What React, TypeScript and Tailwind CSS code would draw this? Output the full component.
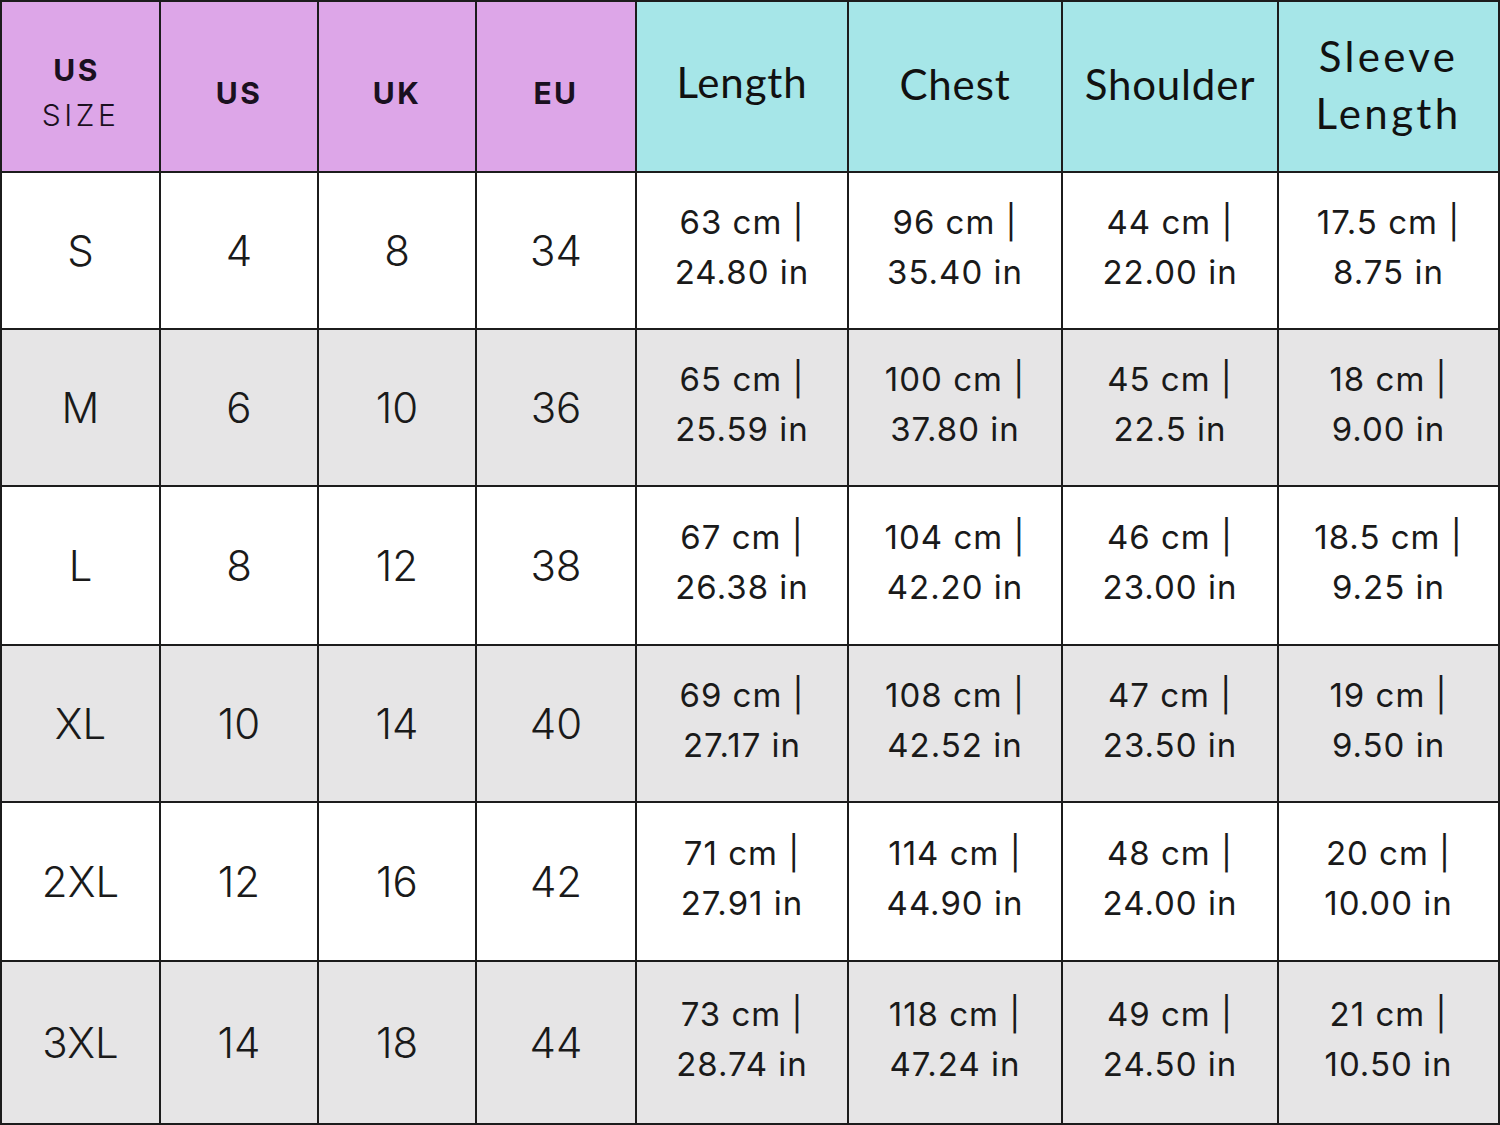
import React from "react";

const rows = [
  { size: "S", us: "4", uk: "8", eu: "34", len: ["63 cm |", "24.80 in"], chest: ["96 cm |", "35.40 in"], sh: ["44 cm |", "22.00 in"], sl: ["17.5 cm |", "8.75 in"] },
  { size: "M", us: "6", uk: "10", eu: "36", len: ["65 cm |", "25.59 in"], chest: ["100 cm |", "37.80 in"], sh: ["45 cm |", "22.5 in"], sl: ["18 cm |", "9.00 in"] },
  { size: "L", us: "8", uk: "12", eu: "38", len: ["67 cm |", "26.38 in"], chest: ["104 cm |", "42.20 in"], sh: ["46 cm |", "23.00 in"], sl: ["18.5 cm |", "9.25 in"] },
  { size: "XL", us: "10", uk: "14", eu: "40", len: ["69 cm |", "27.17 in"], chest: ["108 cm |", "42.52 in"], sh: ["47 cm |", "23.50 in"], sl: ["19 cm |", "9.50 in"] },
  { size: "2XL", us: "12", uk: "16", eu: "42", len: ["71 cm |", "27.91 in"], chest: ["114 cm |", "44.90 in"], sh: ["48 cm |", "24.00 in"], sl: ["20 cm |", "10.00 in"] },
  { size: "3XL", us: "14", uk: "18", eu: "44", len: ["73 cm |", "28.74 in"], chest: ["118 cm |", "47.24 in"], sh: ["49 cm |", "24.50 in"], sl: ["21 cm |", "10.50 in"] },
];

function Big({ v, alt }: { v: string; alt: boolean }) {
  return (
    <div
      className={
        (alt ? "bg-[#e6e5e6] " : "bg-white ") +
        "flex items-center justify-center font-[family-name:Inter,sans-serif] text-[42px] font-light text-[#1a1a1a]"
      }
    >
      {v}
    </div>
  );
}

function Two({ v, alt }: { v: string[]; alt: boolean }) {
  return (
    <div
      className={
        (alt ? "bg-[#e6e5e6] " : "bg-white ") +
        "flex flex-col items-center justify-center pb-[8px] font-[family-name:Inter,sans-serif] text-[33px] leading-[50px] font-normal tracking-[0.03em] text-[#1a1a1a]"
      }
    >
      <span>{v[0]}</span>
      <span>{v[1]}</span>
    </div>
  );
}

export default function App() {
  return (
    <div className="w-[1500px] h-[1125px] bg-white">
      <div className="grid h-full w-full border-2 border-[#1c1c1c] bg-[#1c1c1c] gap-[2px] grid-cols-[157px_156px_156px_158px_210px_212px_214px_219px] grid-rows-[169px_155px_155px_157px_155px_157px_161px]">
        <div className="bg-[#dda6e8] flex flex-col items-center justify-center pt-[16px] font-[family-name:Inter,sans-serif] text-[#1a1020]">
          <span className="text-[30px] font-bold tracking-[0.08em] leading-[40px] -ml-[8px]">US</span>
          <span className="text-[30px] font-light tracking-[0.12em] leading-[50px]">SIZE</span>
        </div>
        {["US", "UK", "EU"].map((h) => (
          <div
            key={h}
            className="bg-[#dda6e8] flex items-center justify-center pt-[14px] font-[family-name:Inter,sans-serif] text-[30px] font-bold tracking-[0.08em] text-[#1a1020]"
          >
            {h}
          </div>
        ))}
        {["Length", "Chest", "Shoulder"].map((h, i) => (
          <div
            key={h}
            className={
              (i === 0 ? "pb-[8px] " : "pb-[4px] ") +
              "bg-[#a6e6e8] flex items-center justify-center font-[family-name:Lato,sans-serif] text-[42px] tracking-[0.02em] text-[#111]"
            }
          >
            {h}
          </div>
        ))}
        <div className="bg-[#a6e6e8] flex flex-col items-center justify-center pb-[4px] font-[family-name:Lato,sans-serif] text-[42px] leading-[57px] tracking-[0.08em] text-[#111]">
          <span>Sleeve</span>
          <span>Length</span>
        </div>
        {rows.map((r, i) => {
          const alt = i % 2 === 1;
          return (
            <React.Fragment key={r.size}>
              <Big v={r.size} alt={alt} />
              <Big v={r.us} alt={alt} />
              <Big v={r.uk} alt={alt} />
              <Big v={r.eu} alt={alt} />
              <Two v={r.len} alt={alt} />
              <Two v={r.chest} alt={alt} />
              <Two v={r.sh} alt={alt} />
              <Two v={r.sl} alt={alt} />
            </React.Fragment>
          );
        })}
      </div>
    </div>
  );
}
